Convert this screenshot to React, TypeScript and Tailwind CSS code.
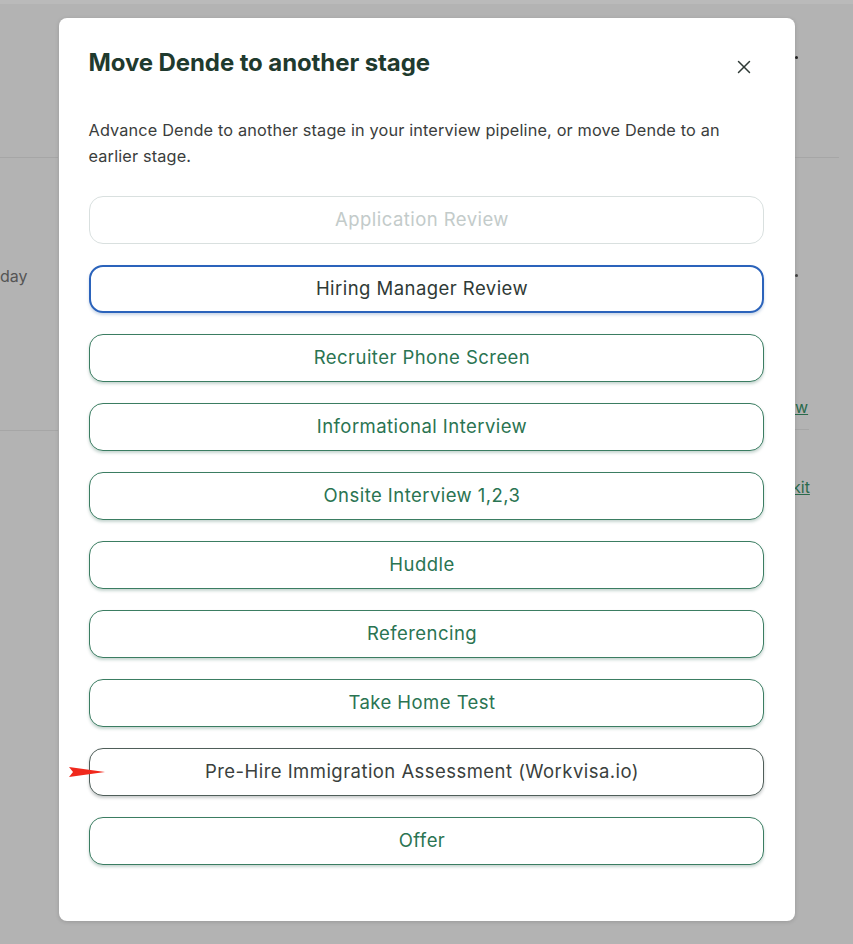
import { X } from "lucide-react";

const stages = [
  { label: "Application Review", kind: "disabled" },
  { label: "Hiring Manager Review", kind: "focused" },
  { label: "Recruiter Phone Screen", kind: "normal" },
  { label: "Informational Interview", kind: "normal" },
  { label: "Onsite Interview 1,2,3", kind: "normal" },
  { label: "Huddle", kind: "normal" },
  { label: "Referencing", kind: "normal" },
  { label: "Take Home Test", kind: "normal" },
  { label: "Pre-Hire Immigration Assessment (Workvisa.io)", kind: "hover" },
  { label: "Offer", kind: "normal" },
];

const styles: Record<string, string> = {
  disabled: "border border-[#d9e0df] text-[#c3cbca]",
  focused:
    "border-2 border-[#2b63bb] text-[#2f3a36] shadow-[0_2px_3px_rgba(40,90,160,0.25)]",
  normal:
    "border border-[#3b7d62] text-[#2a7452] shadow-[0_2px_3px_rgba(30,90,70,0.25)]",
  hover:
    "border border-[#4f5e59] text-[#3a3f3d] shadow-[0_2px_3px_rgba(40,50,50,0.25)]",
};

// page behind the modal, only the edges show
function Backdrop() {
  return (
    <div className="flex justify-between w-full h-full bg-[#b3b3b3] border-t-4 border-[#bababa]">
      <div className="w-[58px] flex flex-col">
        <div className="mt-[153px] h-px bg-[#a6a6a6]" />
        <span className="mt-[106px] text-[16px] leading-[24px] text-[#555]">day</span>
        <div className="mt-[142px] h-px bg-[#a6a6a6]" />
      </div>
      <div className="w-[58px] flex flex-col items-start">
        <div className="mt-[52px] w-[3px] h-[3px] rounded-full bg-[#222]" />
        <div className="mt-[98px] w-[44px] h-px bg-[#a6a6a6]" />
        <div className="mt-[116px] w-[3px] h-[3px] rounded-full bg-[#444]" />
        <span className="mt-[118px] text-[16px] leading-[24px] text-[#2a6a4c] underline">w</span>
        <div className="mt-[10px] w-[14px] h-px bg-[#a6a6a6]" />
        <span className="mt-[45px] -ml-[3px] text-[16px] leading-[24px] text-[#2a6a4c] underline">kit</span>
      </div>
    </div>
  );
}

export default function App() {
  return (
    <div
      className="relative w-[853px] h-[944px] overflow-hidden"
      style={{ fontFamily: "Inter, 'Noto Sans', sans-serif" }}
    >
      <Backdrop />
      <div className="absolute inset-0 flex justify-center pt-[18px]">
        <div className="w-[736px] h-[903px] bg-white rounded-[8px] shadow-[0_1px_4px_rgba(0,0,0,0.15)] px-[30px] pt-[29px]">
          <div className="flex items-start justify-between">
            <h2 className="text-[24px] leading-[32px] font-bold text-[#1f3a2e] tracking-[-0.1px]">
              Move Dende to another stage
            </h2>
            <button className="mt-[9px] mr-[10px] text-[#2f3a36]">
              <X size={22} strokeWidth={1.6} />
            </button>
          </div>
          <p className="mt-[38px] text-[16.3px] leading-[26px] tracking-[0.15px] text-[#3a3d3c] max-w-[660px]">
            Advance Dende to another stage in your interview pipeline, or move
            Dende to an earlier stage.
          </p>
          <div className="mt-[27px] flex flex-col gap-[21px]">
            {stages.map((s) => (
              <div key={s.label} className="relative">
                {s.kind === "hover" && (
                  <svg
                    className="absolute left-[-20px] top-[17px]"
                    width="36"
                    height="14"
                    viewBox="0 0 36 14"
                  >
                    <path d="M0 2 L36 7 L0 12 L4 7 Z" fill="#f0281c" />
                  </svg>
                )}
                <button
                  className={`w-[675px] h-[48px] rounded-[14px] bg-white pr-[8px] text-[18.5px] tracking-[0.45px] ${styles[s.kind]}`}
                >
                  {s.label}
                </button>
              </div>
            ))}
          </div>
        </div>
      </div>
    </div>
  );
}
